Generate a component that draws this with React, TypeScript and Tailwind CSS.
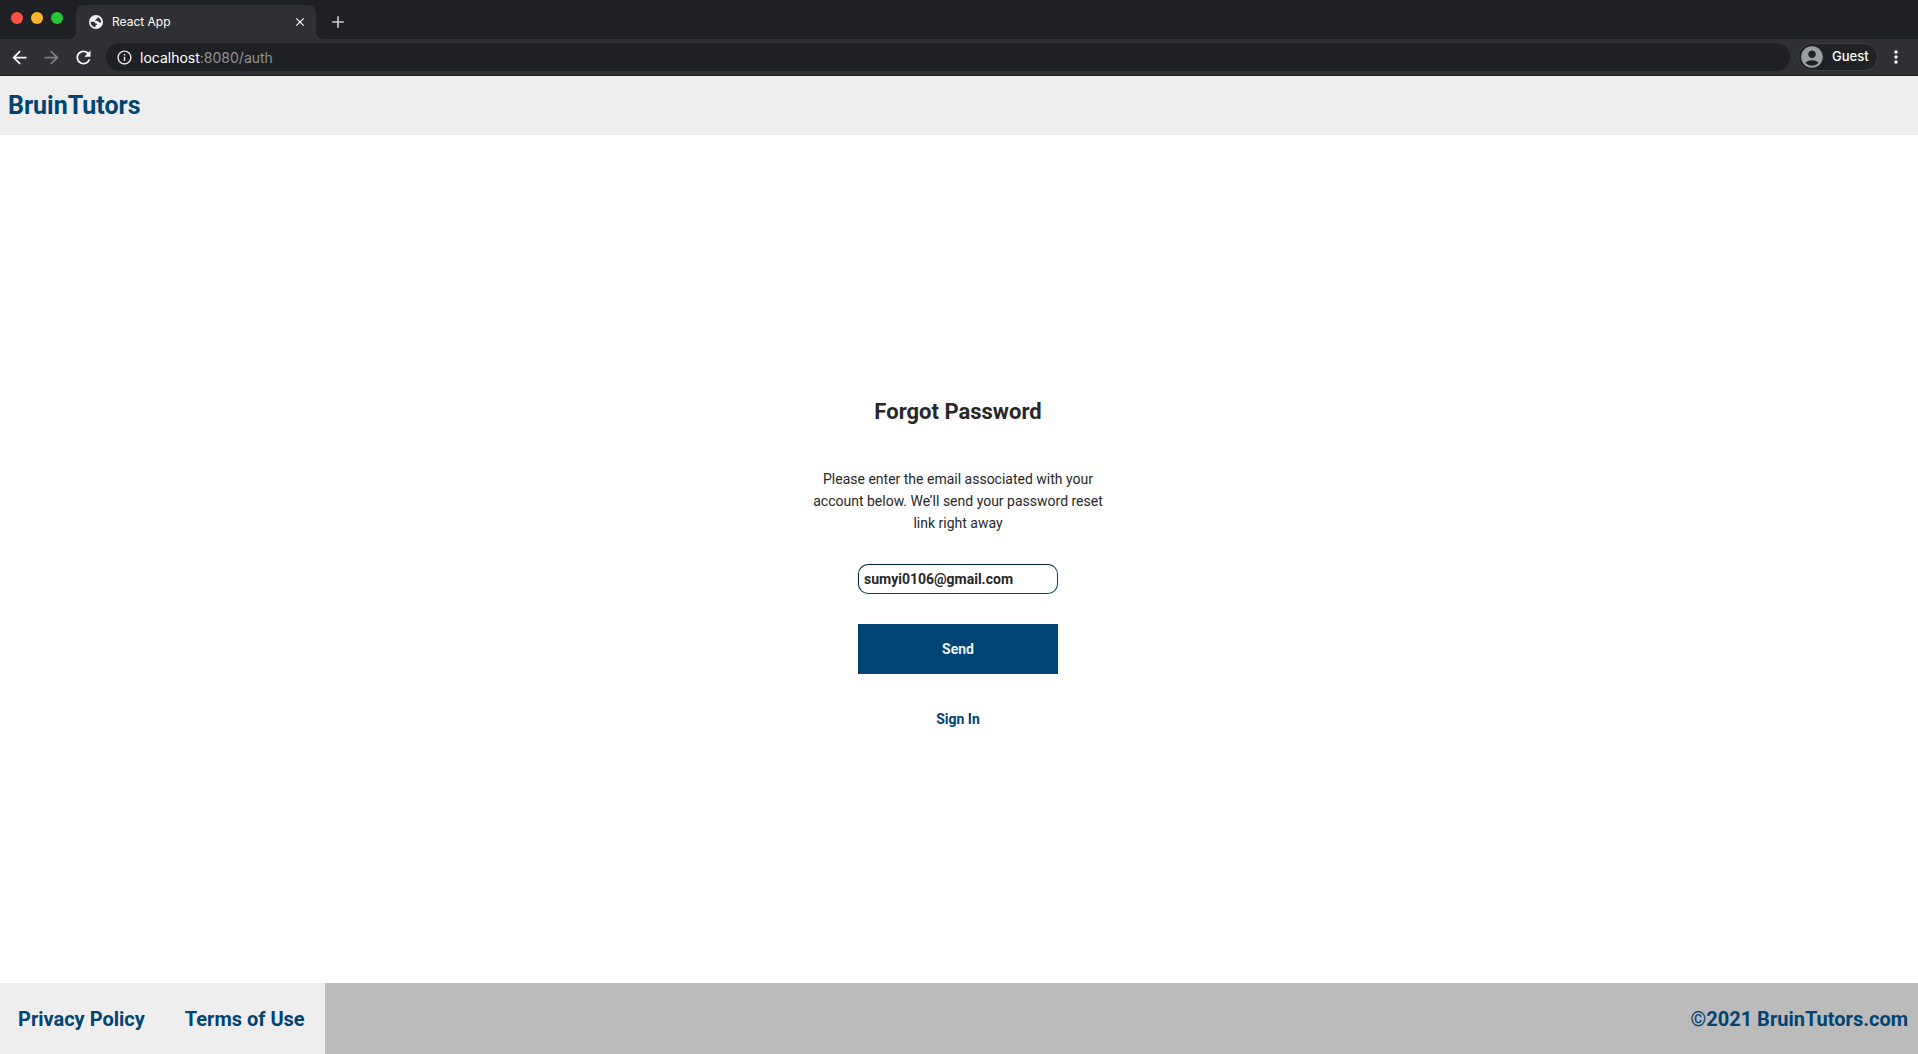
import { useState } from "react";
import {
  MdAccountCircle,
  MdAdd,
  MdArrowBack,
  MdArrowForward,
  MdClose,
  MdInfoOutline,
  MdMoreVert,
  MdRefresh,
} from "react-icons/md";

function GlobeIcon() {
  return (
    <svg viewBox="0 0 14 14" className="size-3.5 shrink-0" aria-hidden="true">
      <circle cx="7" cy="7" r="7" fill="#f1f3f4" />
      <path
        d="M8.2 2.1C8.9 2.6 8.6 3.6 7.7 3.8C7 4 7 4.6 6.4 4.9C5.9 5.1 5.8 5.5 6.3 5.8H8.3C9.3 5.8 9.3 7.2 10.2 7.4H12.3C12.1 5 10.8 2.8 8.2 2.1Z"
        fill="#303034"
      />
      <path
        d="M1.7 6.7H4.6C5.7 6.7 6.3 7.5 6.3 8.4H7.6C8.2 8.4 8.2 9.9 7.4 10C6.6 10.1 6.6 11.4 6.2 12.2C3.4 11.8 1.4 9.4 1.7 6.7Z"
        fill="#303034"
      />
    </svg>
  );
}

function TabFoot({ side }: { side: "left" | "right" }) {
  return (
    <svg viewBox="0 0 8 8" className="size-2 shrink-0 self-end" aria-hidden="true">
      <path d={side === "left" ? "M0 8Q8 8 8 0V8Z" : "M8 8Q0 8 0 0V8Z"} fill="#303034" />
    </svg>
  );
}

function TabStrip() {
  return (
    <div className="flex h-[39px] bg-[#1f2024]">
      <div className="flex items-center gap-2 pb-1 pl-[11px] pr-[5px]">
        <span className="size-3 rounded-full bg-[#ff5048]" />
        <span className="size-3 rounded-full bg-[#feb429]" />
        <span className="size-3 rounded-full bg-[#25c637]" />
      </div>
      <TabFoot side="left" />
      <div className="mt-[5px] flex w-60 items-center rounded-t-lg bg-[#303034] pl-[13px] pr-[9px] text-white">
        <GlobeIcon />
        <span className="ml-[9px] grow text-[12px]">React App</span>
        <button type="button" aria-label="Close tab">
          <MdClose className="size-3.5" />
        </button>
      </div>
      <TabFoot side="right" />
      <button type="button" aria-label="New tab" className="ml-1 mt-1 self-center text-[#c7c8ca]">
        <MdAdd className="size-5" />
      </button>
    </div>
  );
}

function Toolbar() {
  const [address, setAddress] = useState(false);
  return (
    <div className="flex h-[37px] items-center border-b border-[#1b1c1f] bg-[#303034] pl-[9px] pr-3 text-white">
      <div className="flex gap-[11px]">
        <button type="button" aria-label="Back">
          <MdArrowBack className="size-[21px]" />
        </button>
        <button type="button" aria-label="Forward" className="text-[#7e7f82]">
          <MdArrowForward className="size-[21px]" />
        </button>
        <button type="button" aria-label="Reload">
          <MdRefresh className="size-[21px]" />
        </button>
      </div>
      <button
        type="button"
        aria-pressed={address}
        onClick={() => setAddress(!address)}
        className="ml-3 flex h-7 grow items-center gap-[7px] rounded-full bg-[#1f2024] pl-2.5 text-left text-[14px]"
      >
        <MdInfoOutline className="size-[17px] text-[#e8eaed]" />
        <span>
          localhost<span className="text-[#929396]">:8080/auth</span>
        </span>
      </button>
      <button
        type="button"
        className="ml-2 flex h-7 w-20 items-center gap-[7px] rounded-full border border-[#3d3e41] bg-[#202124] text-[13px] font-medium"
      >
        <MdAccountCircle className="size-[26px] shrink-0 text-[#9aa0a6]" />
        Guest
      </button>
      <button type="button" aria-label="Menu" className="ml-2">
        <MdMoreVert className="size-5" />
      </button>
    </div>
  );
}

export default function App() {
  const [email, setEmail] = useState("sumyi0106@gmail.com");
  return (
    <div className="flex min-h-screen flex-col bg-white font-['Roboto',sans-serif] text-[#282828]">
      <div className="font-['Inter',sans-serif]">
        <TabStrip />
        <Toolbar />
      </div>

      <header className="flex h-[59px] items-center bg-[#eeeeee] px-2">
        <a href="#home" className="text-[25px] font-bold text-[#004473]">
          BruinTutors
        </a>
      </header>

      <main className="flex grow flex-col items-center justify-center pt-2 pr-0.5">
        <h1 className="text-[22px] leading-8 font-bold">Forgot Password</h1>
        <p className="mt-10 w-[300px] text-center text-[14px] leading-[22px]">
          Please enter the email associated with your account below. We’ll send your password reset link right away
        </p>
        <form className="mt-[30px] flex w-[200px] flex-col gap-[30px]" onSubmit={(e) => e.preventDefault()}>
          <input
            type="email"
            aria-label="Email"
            value={email}
            onChange={(e) => setEmail(e.target.value)}
            className="h-[30px] rounded-[10px] border border-[#004473] border-t-[#00213a] border-l-[#00213a] px-[5px] text-[14px] font-bold outline-none"
          />
          <button type="submit" className="h-[50px] bg-[#004473] text-[14px] font-bold text-[#eeeeee]">
            Send
          </button>
        </form>
        <a href="#sign-in" className="mt-[34px] text-[14px] leading-[22px] font-bold text-[#004473]">
          Sign In
        </a>
      </main>

      <footer className="flex h-[71px] items-center justify-between bg-[#bbbbbb] text-[20px] font-bold text-[#004473]">
        <nav className="flex h-full items-center gap-10 bg-[#eeeeee] pr-5 pl-[18px]">
          <a href="#privacy">Privacy Policy</a>
          <a href="#terms">Terms of Use</a>
        </nav>
        <span className="pr-2.5">©2021 BruinTutors.com</span>
      </footer>
    </div>
  );
}
